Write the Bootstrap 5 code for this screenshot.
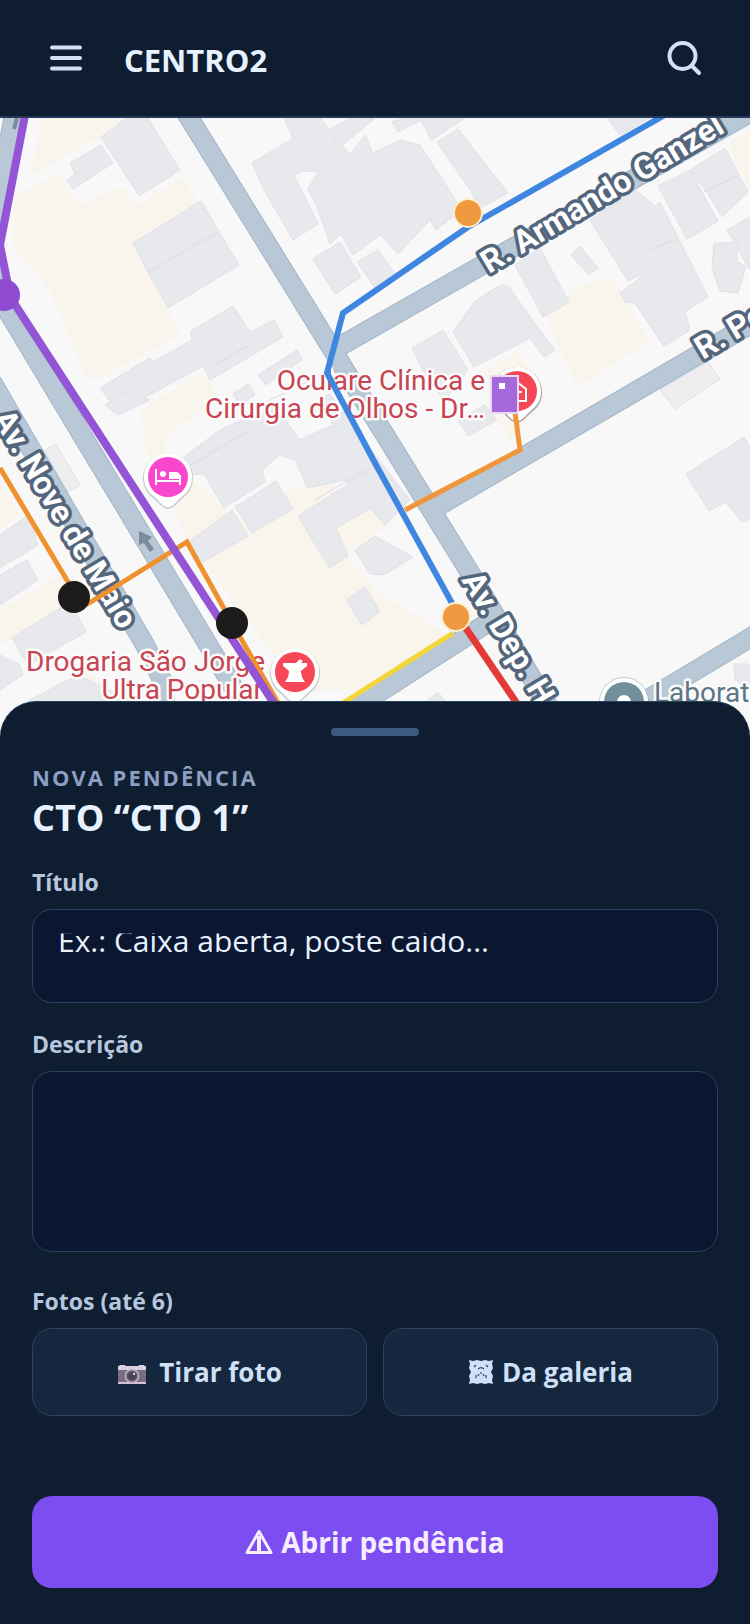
<!DOCTYPE html>
<html lang="pt-BR">
<head>
<meta charset="utf-8">
<meta name="viewport" content="width=device-width, initial-scale=1">
<title>CENTRO2</title>
<link href="https://cdn.jsdelivr.net/npm/bootstrap@5.3.0/dist/css/bootstrap.min.css" rel="stylesheet">
<style>
  body { background: #0e1d30; color: #e8f2ff; font-family: "Open Sans", "Noto Sans", sans-serif; }
  .topbar { height: 118px; padding: 0 48px; gap: 40px; border-bottom: 2px solid #27395a; color: #d3e1f5; }
  .topbar h1 { font-size: 31px; line-height: 40px; padding-top: 4px; color: #e8f2ff; }
  .icon-btn { padding: 0; border: 0; color: inherit; line-height: 1; }
  .icon-btn svg { display: block; }
  .map-area { min-height: 400px; background: #f8f8f8; }
  .map-area svg { position: absolute; inset: 0; width: 100%; height: 100%; }
  .sheet { margin-top: -36px; padding: 26px 32px 36px; background: #0e1d30; border-top: 1px solid #27405c; border-radius: 36px 36px 0 0; }
  .grip { width: 88px; height: 8px; border-radius: 4px; background: #3c5a7e; }
  .eyebrow { margin-top: 25px; font-size: 22px; line-height: 32px; letter-spacing: 2px; color: #8c9fc0; }
  .sheet h2 { font-size: 36px; line-height: 50px; margin-bottom: 23px; }
  .field-label { display: block; font-size: 23px; line-height: 32px; margin-bottom: 11px; color: #b7c7df; }
  .field, .field:focus { background: #0b1730; border: 1px solid #2a4161; border-radius: 20px; color: #e8f2ff; font-size: 30px; line-height: 40px; padding: 24px; resize: none; }
  .field-line, .field-line:focus { height: 94px; margin-bottom: 25px; padding: 7px 25px 39px; }
  .field-area { height: 181px; margin-bottom: 33px; }
  /* the hint sits high in the field, with the tops of its letters cut */
  .field::placeholder { color: #e8f2ff; opacity: 1; clip-path: inset(14px 0 0 0); }
  .btn-photo { height: 88px; background: #15263f; border: 1px solid #2a4464; border-radius: 20px; color: #cfe0f7; font-size: 26px; }
  .btn-photo:hover { background: #1b3050; color: #cfe0f7; border-color: #2a4464; }
  .btn-open { height: 92px; margin-top: 80px; background: #7c4df1; border: 0; border-radius: 20px; color: #f6edff; font-size: 28px; }
  .btn-open:hover { background: #6d3fe0; color: #f6edff; }
  .road path { fill: none; stroke: #b8c8d7; stroke-width: 18; }
  .road-edge path { fill: none; stroke: #a5b5c6; stroke-width: 20; }
  .street { font: 700 32px Roboto, sans-serif; fill: #fff; stroke: #53667c; stroke-width: 7; stroke-linejoin: round; paint-order: stroke; }
  .poi { font: 400 28px Roboto, sans-serif; fill: #c94452; stroke: #fbfbfb; stroke-width: 5; stroke-linejoin: round; paint-order: stroke; }
  .poi-grey { fill: #5b7686; }
</style>
</head>
<body class="min-vh-100 d-flex flex-column">

<header class="topbar d-flex align-items-center flex-shrink-0">
  <button class="btn icon-btn" type="button" aria-label="Menu">
    <svg width="36" height="36" viewBox="0 0 36 36" fill="none" stroke="currentColor" stroke-width="4" stroke-linecap="round"><path d="M4 7.500h28M4 18h28M4 28.500h28"/></svg>
  </button>
  <h1 class="fw-bold mb-0 me-auto">CENTRO2</h1>
  <button class="btn icon-btn" type="button" aria-label="Buscar">
    <svg width="36" height="36" viewBox="0 0 36 36" fill="none" stroke="currentColor" stroke-width="4" stroke-linecap="round"><circle cx="16.500" cy="16" r="13"/><path d="M26 26l7 7"/></svg>
  </button>
</header>

<main class="d-flex flex-column flex-grow-1">
  <section class="map-area position-relative flex-grow-1 overflow-hidden" aria-label="Mapa">
    <svg viewBox="0 118 750 620" preserveAspectRatio="xMidYMin slice">
      <rect x="-20" y="100" width="800" height="660" fill="#f8f8f8"/>
      <g fill="#faf5ec">
        <path d="M42 118H134L103 135L30 176Z"/>
        <path d="M14 195L60 174L78 206L122 186L138 205L182 178L200 202L133 243L180 335L98 380L86 378L50 290L14 250Z"/>
        <path d="M140 410L202 372L218 395L165 440L170 460L220 505L235 520L330 470L350 560L375 590L455 640L380 690L300 690L232 600L190 545L145 450Z"/>
        <path d="M545 315L577 287L612 276L650 342L577 387Z"/>
        <path d="M728 142L750 132V192Z"/>
        <path d="M485 370L518 352L540 380L545 400L510 440L500 425Z"/>
        <path d="M0 480L20 515L0 530ZM0 610L60 575L75 600L0 645Z"/>
        <path d="M375 490L398 518L375 535L340 555L325 520Z"/>
        <path d="M30 700L85 668L110 690V710H20Z"/>
      </g>
      <g fill="#e8e9ed" stroke="#dfe1e6" stroke-width="1">
        <path d="M101 137L127 118H148L180 170L139 196Z"/>
        <path d="M70 163L101 145L113 163L73 189L67 181L75 174Z"/>
        <path d="M133 243L201 201L239 265L168 308L148 272Z"/>
        <path d="M100 388L150 358L153 362L192 340L191 331L233 306L250 332L274 320L283 337L210 380L203 366L118 412Z"/>
        <path d="M258 375L297 350L302 360L266 385ZM233 394L248 384L255 395L240 405Z"/>
        <path d="M252 163L293 138L284 118H320L350 155L365 135L373 153L400 140L420 145L462 210L436 230L430 220L398 254L380 235L353 255L341 234L330 244L317 207L308 189L318 172L303 171L294 175L318 224L293 240L264 190Z"/>
        <path d="M329 130L350 118H375L338 149Z"/>
        <path d="M313 259L340 242L361 277L335 294ZM357 262L378 250L396 275L375 288Z"/>
        <path d="M437 142L458 129L508 193L480 208L470 190Z"/>
        <path d="M392 122L405 118H425L398 132ZM420 118H465L431 140Z"/>
        <path d="M607 118H650L620 135Z"/>
        <path d="M590 220L635 190L655 206L660 202L708 297L685 312L690 330L664 346L634 302L626 303L620 293L652 269L628 281L610 252Z"/>
        <path d="M658 186L690 170L718 221L687 239ZM690 170L725 148L748 192L722 217L707 192Z"/>
        <path d="M727 230L750 217V270Z"/>
        <path d="M714 243H737V262L746 266L738 293L720 291L712 268Z"/>
        <path d="M515 265L540 248L569 302L543 317ZM571 255L580 246L598 268L589 275Z"/>
        <path d="M474 302L500 285L508 286L536 325L555 350L544 357L530 338L474 367L453 332Z"/>
        <path d="M412 348L443 330L468 370L445 400L430 384Z"/>
        <path d="M180 460L220 430L275 405L300 440L333 425L320 398L330 394L367 445L410 500L385 525L345 480L308 488L295 460L280 455L262 470L265 482L224 508L204 474L190 475Z"/>
        <path d="M105 405L125 393L150 400L118 415Z"/>
        <path d="M186 544L232 510L248 536L203 562ZM235 507L276 481L293 509L252 533Z"/>
        <path d="M298 516L365 473L385 500L336 528L348 556L330 568L310 536ZM355 550L375 536L413 557L384 575L370 574Z"/>
        <path d="M346 600L365 587L380 612L362 625Z"/>
        <path d="M0 535L28 515L38 545L0 568ZM0 575L27 560L38 580L0 605ZM12 638L70 602L86 632L28 665Z"/>
        <path d="M0 655L20 665L23 675L0 690Z"/>
        <path d="M45 450L56 444L80 485L67 492Z" fill="#eeeef1"/>
        <path d="M660 390L708 362L720 379L675 409Z" fill="#f0edf0"/>
        <path d="M686 474L744 437L770 480V510L742 522L726 502L709 511Z"/>
        <path d="M458 420L485 405L497 420L468 436ZM734 664H748L760 680L755 695L735 680Z"/>
        <path d="M30 700L78 675L130 700L140 718H20ZM410 715L438 692L448 705L435 720Z"/>
      </g>
      <g fill="none" stroke="#d8dbe0"><path d="M148 272L218 232M648 250L675 240M704 192L740 175M166 480L250 430M270 400L310 380M215 365L247 346M315 500L365 470"/></g>
      <g class="road-edge">
        <path d="M180 103L340 362L472 576L567 738"/><path d="M335 349L760 107"/><path d="M435 508L621 400L770 313"/><path d="M492 620L383 690L320 728"/><path d="M770 626L663 690L600 728"/><path d="M15 110L-8 230L-5 290L61 400L222 668L250 716"/><path d="M-8 382L145 645L162 680L170 738"/>
      </g>
      <g class="road">
        <path d="M180 103L340 362L472 576L567 738"/><path d="M335 349L760 107"/><path d="M435 508L621 400L770 313"/><path d="M492 620L383 690L320 728"/><path d="M770 626L663 690L600 728"/><path d="M15 110L-8 230L-5 290L61 400L222 668L250 716"/><path d="M-8 382L145 645L162 680L170 738"/>
      </g>
      <path d="M139 531L152 537L148 541L154 549L150 552L144 543L139 545Z" fill="#7d8c9c"/>
      <path d="M17 118L14 129" stroke="#7d8c9c" stroke-width="4"/>

      <g class="poi">
        <text x="485" y="390" text-anchor="end">Oculare Clínica e</text>
        <text x="485" y="418" text-anchor="end">Cirurgia de Olhos - Dr…</text>
        <text x="265" y="671" text-anchor="end">Drogaria São Jorge</text>
        <text x="263" y="699" text-anchor="end">Ultra Popular</text>
        <text class="poi-grey" x="654" y="702">Laboratório</text>
      </g>
      <g class="street">
        <text transform="translate(489 274) rotate(-31)">R. Armando Ganzel</text>
        <text transform="translate(703 360) rotate(-31)">R. Pedro</text>
        <text transform="translate(-8 418) rotate(59)">Av. Nove de Maio</text>
        <text transform="translate(461 580) rotate(59)">Av. Dep. H</text>
      </g>

      <defs>
        <path id="pin" d="M0-24A24 24 0 0 0-17 17C-9 23-6 30 0 30S9 23 17 17A24 24 0 0 0 0-24Z"/>
      </defs>
      <g transform="translate(168 477)"><use href="#pin" y="1" fill="#9aa" stroke="#9aa" stroke-width="2" opacity=".5"/><use href="#pin" fill="#fff"/><circle r="20" fill="#f947cd"/><path d="M-12-8V8M-12 4H12M12 8V-2" stroke="#fff" stroke-width="2" fill="none"/><circle cx="-5" cy="-3" r="3" fill="#fff"/><path d="M1-5H9Q12-4 12-1V2H1Z" fill="#fff"/></g>
      <g transform="translate(295 672)"><use href="#pin" y="1" fill="#9aa" stroke="#9aa" stroke-width="2" opacity=".5"/><use href="#pin" fill="#fff"/><circle r="20" fill="#f54755"/><path d="M-12-9H1L5-13L8-11L6-9H12V-6L6-1Q6 5 10 10H-10Q-6 5-6-1L-12-6Z" fill="#fff"/></g>
      <g transform="translate(517 391)"><use href="#pin" y="1" fill="#778" stroke="#778" stroke-width="2" opacity=".6"/><use href="#pin" fill="#fff"/><circle r="20" fill="#f54755"/><path d="M-8-2L0-9L9-2V10H-8ZM0-4V6M-5 1H5" fill="none" stroke="#fff" stroke-width="2"/></g>
      <g transform="translate(624 702)"><use href="#pin" fill="#9aa" stroke="#9aa" stroke-width="2" opacity=".5"/><use href="#pin" fill="#fff"/><circle r="20" fill="#738f9c"/><circle r="7" fill="#fff"/></g>

      <g fill="none" stroke-width="5">
        <path d="M405 510L520 450L515 412" stroke="#f0953a"/>
        <path d="M0 468L74 592M86 605L187 542L232 623L281 708" stroke="#f0912f"/>
        <path d="M453 633L335 708" stroke="#f3d63a"/>
        <path d="M463 624L520 708" stroke="#e33a35" stroke-width="7"/>
        <path d="M670 112L468 227L343 313L327 373L375 463L453 605" stroke="#3f86e0" stroke-width="6"/>
        <path d="M26 110L0 245L8 285L14 303L277 708" stroke="#9355d6" stroke-width="8"/>
      </g>
      <circle cx="4" cy="295" r="16" fill="#8e4bd2"/>
      <g fill="#1b1b1b"><circle cx="74" cy="597" r="16"/><circle cx="232" cy="623" r="16"/></g>
      <g fill="#ef9a40" stroke="#fdeccb" stroke-width="2"><circle cx="468" cy="213" r="14"/><circle cx="456" cy="617" r="14"/></g>
      <rect x="491" y="376" width="27" height="37" fill="#a768dc" stroke="#eadaf8" stroke-width="2"/>
      <rect x="499" y="383" width="6" height="6" fill="#fff"/>
    </svg>
  </section>

  <form class="sheet position-relative flex-shrink-0">
    <div class="grip mx-auto"></div>
    <p class="eyebrow fw-bold mb-0">NOVA PENDÊNCIA</p>
    <h2 class="fw-bold">CTO “CTO 1”</h2>

    <label class="field-label fw-bold" for="titulo">Título</label>
    <input class="form-control field field-line" id="titulo" type="text" placeholder="Ex.: Caixa aberta, poste caído...">

    <label class="field-label fw-bold" for="descricao">Descrição</label>
    <textarea class="form-control field field-area" id="descricao"></textarea>

    <span class="field-label fw-bold" id="fotos">Fotos (até 6)</span>
    <div class="row g-3" role="group" aria-labelledby="fotos">
      <div class="col-6">
        <button class="btn btn-photo fw-bold w-100 d-flex align-items-center justify-content-center gap-2" type="button">
          <svg class="me-1" width="30" height="24" viewBox="0 0 30 24" aria-hidden="true"><path d="M3 5H8L9 7H21L22 5H27L28 7H1Z" fill="#d6cfdd"/><rect x="1" y="6" width="28" height="18" rx="1" fill="#776f80"/><path d="M1 6H29V10H1Z" fill="#d9d3e0"/><path d="M1 22H29V24H1Z" fill="#d6bfdc"/><circle cx="15" cy="16" r="6.500" fill="#655d70" stroke="#c5b4cf" stroke-width="1.500"/><circle cx="15" cy="16" r="4" fill="#4a4457"/><circle cx="17" cy="14" r="1" fill="#fff"/></svg>
          Tirar foto
        </button>
      </div>
      <div class="col-6">
        <button class="btn btn-photo fw-bold w-100 d-flex align-items-center justify-content-center gap-2" type="button">
          <svg width="26" height="26" viewBox="0 0 26 26" aria-hidden="true"><path d="M1 1L5 2L9 1L13 2L17 1L21 2L25 1L24 5L25 9L23 13L25 17L24 21L25 25L21 24L17 25L13 24L9 25L5 24L1 25L2 21L1 17L3 13L1 9L2 5Z" fill="#cfe0f7"/><path d="M6 8L8 6M18 6L20 8M10 10Q13 7 16 10M8 19V16M18 19V16M12 14H14M10 17L11 15M16 17L15 15" fill="none" stroke="#2b405f" stroke-width="1.200"/></svg>
          Da galeria
        </button>
      </div>
    </div>

    <button class="btn btn-open fw-bold w-100 d-flex align-items-center justify-content-center gap-2" type="submit">
      <svg width="28" height="26" viewBox="0 0 28 26" fill="none" stroke="currentColor" stroke-linejoin="round" aria-hidden="true"><path d="M14 2.500L26 23.500H2Z" stroke-width="3"/><path d="M14 7V23" stroke-width="4"/></svg>
      Abrir pendência
    </button>
  </form>
</main>

<script src="https://cdn.jsdelivr.net/npm/bootstrap@5.3.0/dist/js/bootstrap.bundle.min.js"></script>
</body>
</html>
